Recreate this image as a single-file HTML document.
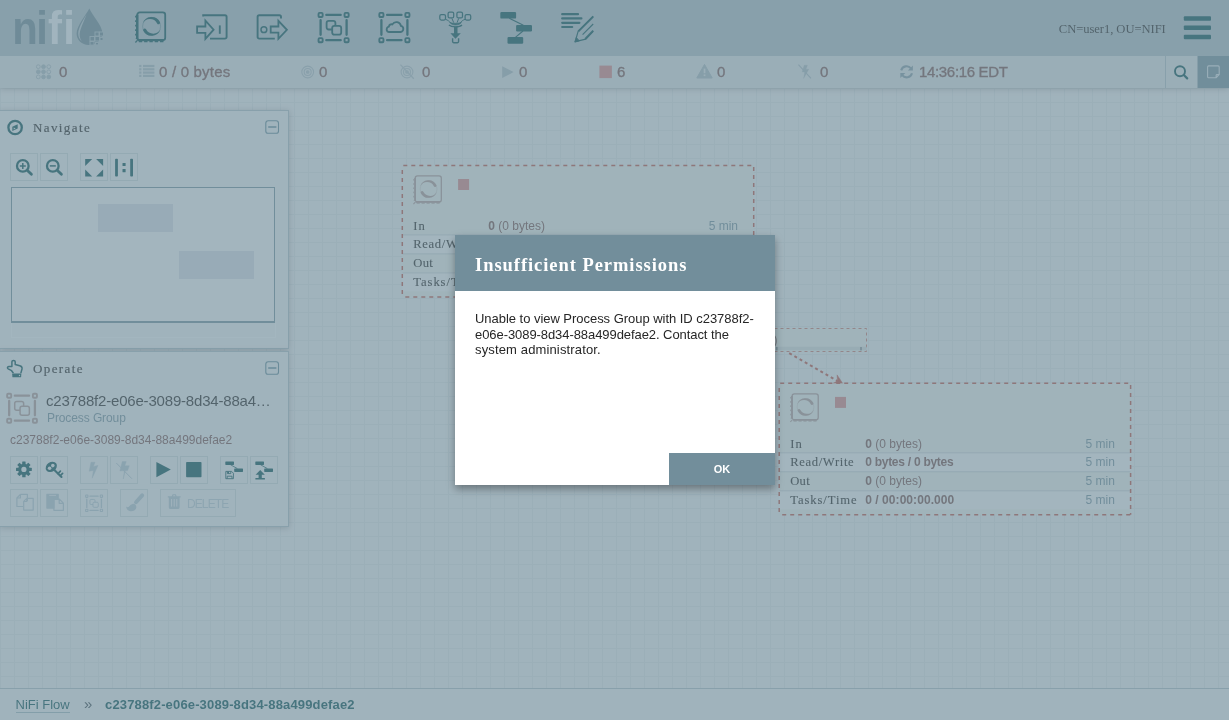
<!DOCTYPE html>
<html><head><meta charset="utf-8"><title>NiFi Flow</title>
<style>
*{box-sizing:border-box}
html,body{margin:0;padding:0}
body{width:1229px;height:720px;overflow:hidden;position:relative;font-family:"Liberation Sans",sans-serif;background:#f9fafb;color:#262626}
.abs{position:absolute}
.st,.ptitle,#crumbs,#opname,#optype,#opid,#deltxt,#dtitle,#dtext,#ok{will-change:transform}
#canvas{position:absolute;left:0;top:88px;width:1229px;height:632px;background-color:#e7eaed;
 background-image:linear-gradient(to right,#d9e0e4 1px,transparent 1px),linear-gradient(to bottom,#d9e0e4 1px,transparent 1px);background-size:14px 14px}
#flow{position:absolute;left:0;top:0;width:1229px;height:720px}
#header{position:absolute;left:0;top:0;width:1229px;height:56px;background:#aabbc3;z-index:2}
#glass,#dialog{z-index:5}
#status{position:absolute;left:0;top:56px;width:1229px;height:32px;background:#d8dee1;box-shadow:0 1px 6px rgba(0,0,0,.25)}
.st{position:absolute;top:0;height:32px;line-height:32px;font-size:15px;color:#775351;white-space:nowrap;-webkit-text-stroke:.35px #775351}
.panel{position:absolute;left:0;width:289px;background:#e7eaed;border:1px solid #aabbc3;border-left:none;box-shadow:0 1px 6px rgba(0,0,0,.25)}
.ptitle{-webkit-text-stroke:.2px #262626;position:absolute;left:33px;font-family:"Liberation Serif",serif;font-size:13px;letter-spacing:1.4px;color:#262626;white-space:nowrap}
.btn{position:absolute;width:28px;height:28px;border:1px solid #c7d4d6;background:#e7eaed}
.btn.dis{border-color:#dde6e8}
#crumbs{position:absolute;left:0;top:688px;width:1229px;height:32px;background:#e7eaed;border-top:1px solid #aabbc3;font-size:13px;line-height:31px;white-space:nowrap}
#glass{position:absolute;left:0;top:0;width:1229px;height:720px;background:#728e9b;opacity:.6}
#dialog{position:absolute;left:455px;top:235px;width:320px;height:250px;background:#fff;box-shadow:0 4px 8px rgba(0,0,0,.34)}
#dhead{position:absolute;left:0;top:0;width:320px;height:56px;background:#728e9b}
#dtitle{position:absolute;left:19.5px;top:18.7px;font-family:"Liberation Serif",serif;font-weight:bold;font-size:18.5px;letter-spacing:.95px;color:#fff;white-space:nowrap;line-height:22px}
#dtext{position:absolute;left:20px;top:75.8px;font-size:13px;line-height:15.7px;color:#262626;white-space:nowrap}
#ok{position:absolute;left:214px;top:218px;width:106px;height:32px;background:#728e9b;color:#fff;font-size:11px;font-weight:bold;text-align:center;line-height:32px}
svg{overflow:visible;will-change:transform}
</style></head><body>

<div id="canvas"></div>
<svg id="flow" viewBox="0 0 1229 720">
<!--FLOW-START-->
 <defs>
  
  <g id="chip2" fill="none">
    <rect x="1.1" y="0.9" width="27.9" height="27.8" rx="2.4" stroke-width="1.35"/>
    <path d="M0.9 3.2V27.6" stroke-width="1.8"/>
    <path d="M2 28.7H27.6" stroke-width="1.7"/>
    <path d="M-0.4 4.2V27" stroke-width="1" stroke-dasharray="1.7 2.8"/>
    <path d="M2.6 30H28" stroke-width="1" stroke-dasharray="3.4 1.9"/>
    <path d="M1.4 28.6L-0.8 31" stroke-width="1.1"/>
    <circle cx="15.4" cy="14.9" r="9" stroke-width="0.7" opacity=".4"/>
    <g stroke="none" fill="currentColor">
     <path id="cres2" d="M6.46 12A9.4 9.4 0 0 1 23.7 10.49A1.5 1.5 0 0 1 21.05 11.9A8.2 8.2 0 0 0 6.46 12Z"/>
     <use href="#cres2" transform="rotate(180 15.4 14.9)"/>
    </g>
   </g>
   <g id="proc">
   <rect x="0" y="0" width="351.4" height="131.5" fill="#e5ebe8"/>
   <rect x="0" y="69" width="351.4" height="19" fill="#edf0f3"/>
   <rect x="0" y="107" width="351.4" height="19" fill="#edf0f3"/>
   <path d="M0 69.5h351.4M0 88.5h351.4M0 107.5h351.4" stroke="#c7cfd4" stroke-width="1" fill="none"/>
   <g fill="none" stroke="#ba554a" stroke-width="1.5" stroke-dasharray="4 4"><path d="M0 0H351.4" stroke-dashoffset="-1"/><path d="M0 4.7V131.5"/><path d="M0 131.5H351.4" stroke-dashoffset="-3"/><path d="M351.4 0V131.5" stroke-dashoffset="-1.6"/></g>
   <g transform="translate(11.9 9.7) scale(.935)" stroke="#ad9897" color="#ad9897"><use href="#chip2"/></g>
   <rect x="55.8" y="13.6" width="11" height="11" fill="#d18686"/>
   <g font-family="'Liberation Serif',serif" font-size="12.6" fill="#262626" stroke="#262626" stroke-width=".12">
    <text x="11" y="64.5" textLength="11.5">In</text>
    <text x="11" y="82.5" textLength="63.5">Read/Write</text>
    <text x="11" y="101.5" textLength="19.5">Out</text>
    <text x="11" y="120.5" textLength="66.5">Tasks/Time</text>
   </g>
   <g font-family="'Liberation Sans',sans-serif" font-size="12" fill="#775351">
    <text x="86" y="64.5"><tspan font-weight="bold">0</tspan> (0 bytes)</text>
    <text x="86" y="82.5" font-weight="bold" textLength="88.5">0 bytes / 0 bytes</text>
    <text x="86" y="101.5"><tspan font-weight="bold">0</tspan> (0 bytes)</text>
    <text x="86" y="120.5" font-weight="bold" textLength="89">0 / 00:00:00.000</text>
   </g>
   <g font-family="'Liberation Sans',sans-serif" font-size="12" fill="#728e9b" text-anchor="end">
    <text x="335.7" y="64.5">5 min</text>
    <text x="335.7" y="82.5">5 min</text>
    <text x="335.7" y="101.5">5 min</text>
    <text x="335.7" y="120.5">5 min</text>
   </g>
  </g>
 </defs>
 <!-- connection label (mostly hidden behind dialog) -->
 <g>
  <rect x="642.5" y="328.5" width="224" height="23" fill="#e5ebe8" stroke="#ba554a" stroke-opacity=".75" stroke-width="1" stroke-dasharray="3 3"/>
  <rect x="643.5" y="346.7" width="223" height="3.5" fill="#d3d9da"/>
  <rect x="776" y="347" width="1.6" height="3.4" fill="#7d8a90"/><rect x="860.2" y="347" width="1.6" height="3.4" fill="#7d8a90"/>
  <text x="777.6" y="344" font-family="'Liberation Sans',sans-serif" font-size="12" fill="#775351" text-anchor="end"><tspan font-weight="bold">0</tspan> (0 bytes)</text>
 </g>
 <path d="M789.2 353.2L837.5 381.1" stroke="#ba554a" stroke-width="2" stroke-dasharray="3 3" fill="none"/>
 <path d="M843.4 384.5L837.1 374.9L837.5 381.1L832 383.8Z" fill="#ba554a" stroke="#ba554a" stroke-width=".5" stroke-linejoin="round"/>
 <use href="#proc" x="402.3" y="165.4"/>
 <use href="#proc" x="779.2" y="383.3"/>
<!--FLOW-END-->
</svg>

<div id="header">
<!--HEADER-START-->
 <svg class="abs" style="left:0;top:0" width="1229" height="56" viewBox="0 0 1229 56">
  <defs>
   <g id="chip" fill="none">
    <rect x="1.1" y="0.9" width="27.9" height="27.8" rx="2.4" stroke-width="1.8"/>
    <path d="M1 3.2V27.6" stroke-width="2.4"/>
    <path d="M2 28.6H27.6" stroke-width="2.2"/>
    <path d="M-0.5 4.2V27" stroke-width="1.2" stroke-dasharray="1.7 2.8"/>
    <path d="M2.6 30.2H28" stroke-width="1.2" stroke-dasharray="3.4 1.9"/>
    <path d="M1.4 28.6L-0.8 31" stroke-width="1.3"/>
    <circle cx="15.4" cy="14.9" r="9" stroke-width="0.7" opacity=".45"/>
    <g stroke="none" fill="currentColor">
     <path id="cres" d="M6.46 12A9.4 9.4 0 0 1 23.7 10.49A1.55 1.55 0 0 1 20.96 11.94A8.2 8.2 0 0 0 6.46 12Z"/>
     <use href="#cres" transform="rotate(180 15.4 14.9)"/>
    </g>
   </g>
   <g id="grpframe" fill="none">
    <rect x="0.95" y="1" width="4.1" height="4.1" rx="1" stroke-width="1.9"/>
    <rect x="26.95" y="1" width="4.1" height="4.1" rx="1" stroke-width="1.9"/>
    <rect x="0.95" y="26.25" width="4.1" height="4.1" rx="1" stroke-width="1.9"/>
    <rect x="26.95" y="26.25" width="4.1" height="4.1" rx="1" stroke-width="1.9"/>
    <path d="M8.7 3.05H23.1M8.7 28.3H23.1M3 8.3V22.9M29 8.3V22.9" stroke-width="2.3" stroke-linecap="round"/>
   </g>
  </defs>
  <!-- logo -->
  <g font-family="'Liberation Sans',sans-serif" font-weight="bold" font-size="47">
   <text transform="translate(12.2 43.5) scale(.89 1)" fill="#6c8894">n</text>
   <text transform="translate(36.3 43.5) scale(.89 1)" fill="#6c8894">i</text>
   <text transform="translate(47.9 43.5) scale(.89 1)" fill="#e8eef2">f</text>
   <text transform="translate(63.2 43.5) scale(.89 1)" fill="#e8eef2">i</text>
  </g>
  <path d="M89.3 8.6C86.5 14.5 76.6 26 76.6 33.6C76.6 40.2 82 45 88.6 45C96 45 102.4 40 102.4 33.2C102.4 26 92 15 89.3 8.6Z" fill="#6c8894"/>
  <path d="M86.6 14.2C82.8 20.5 78.2 28 78.2 33.6C78.2 37 79.6 39.6 81.8 41.4C79.6 38.4 79.2 35 80 31.6C81 27.2 84.4 20 86.6 14.2Z" fill="#b5c4cc"/>
  <g fill="#6c8894" stroke="#aabbc3" stroke-width="1">
   <rect x="95" y="32" width="4" height="4"/><rect x="99.5" y="32" width="4" height="4"/>
   <rect x="90" y="36.5" width="4.5" height="4.5"/><rect x="95" y="36.5" width="4.5" height="4.5"/><rect x="100" y="37.5" width="3" height="3"/>
   <rect x="90" y="41.5" width="4" height="3.6"/><rect x="95.5" y="42.5" width="3" height="2.4"/>
  </g>
  <g stroke="#095055" fill="none">
   <!-- processor -->
   <use href="#chip" x="136.2" y="11.5" color="#095055"/>
   <!-- input port -->
   <path d="M203.2 16.4V15.2H225A1.6 1.6 0 0 1 226.6 16.8V37A1.6 1.6 0 0 1 225 38.6H210" stroke-width="1.9"/>
   <path d="M197.1 26.5H205.4V20.6L213.6 29.7L205.4 38.8V32.9H197.1Z" stroke-width="1.8" stroke-linejoin="miter"/>
   <path d="M219.8 25.4V33.8" stroke-width="1.9"/>
   <!-- output port -->
   <path d="M281 18.6V16.8A1.6 1.6 0 0 0 279.4 15.2H259.2A1.6 1.6 0 0 0 257.6 16.8V37A1.6 1.6 0 0 0 259.2 38.6H274.8" stroke-width="1.9"/>
   <path d="M270.7 26.5H278.4V20.8L286.9 29.8L278.4 38.8V32.6H270.7Z" stroke-width="1.8"/>
   <circle cx="263.9" cy="29.7" r="2.9" stroke-width="1.5"/>
   <!-- process group -->
   <use href="#grpframe" x="317.6" y="11.9"/>
   <rect x="326.6" y="20.9" width="8.8" height="8.6" rx="2.2" stroke-width="1.8"/>
   <rect x="332.2" y="25.8" width="9" height="8.8" rx="2.2" stroke-width="1.8" fill="#aabbc3"/>
   <!-- remote process group -->
   <use href="#grpframe" x="378.4" y="11.9"/>
   <path d="M388.6 32H400.6A3.1 3.1 0 0 0 400.9 25.9A4.6 4.6 0 0 0 392.4 24.4A2.6 2.6 0 0 0 388.9 26.6A2.8 2.8 0 0 0 388.6 32Z" stroke-width="1.8"/>
   <!-- funnel -->
   <g stroke-width="1.25">
    <rect x="439.8" y="14.5" width="5.7" height="5.5" rx="1.5"/>
    <rect x="448.1" y="12.1" width="5.6" height="5.8" rx="1.5"/>
    <rect x="456.9" y="12.1" width="5.6" height="5.8" rx="1.5"/>
    <rect x="465.1" y="14.5" width="5.6" height="5.5" rx="1.5"/>
    <path d="M445.6 19.4C447.6 20 449.4 21.2 450.6 23M451.9 18.4L453.7 22.6M458.7 18.4L457.1 22.6M465 19.4C463 20 461.4 21.2 460.2 23" stroke-width="1"/>
    <path d="M448.9 25C451.6 27.6 459.4 27.6 462 25" stroke-width="1.2"/>
    <path d="M452.6 38.2V41.6A1.1 1.1 0 0 0 453.7 42.7H457.5A1.1 1.1 0 0 0 458.6 41.6V38.2" stroke-width="1.4"/>
   </g>
   <path d="M449.9 22.5C452 23.6 459 23.6 461.3 22.5C460.6 23.8 458.2 25 455.6 25C453 25 450.6 23.8 449.9 22.5Z" fill="#095055" stroke-width=".7"/>
   <path d="M454 26.4H457.5V33.3H460.8L455.45 38.8L450.4 33.3H454Z" fill="#095055" stroke="none"/>
   <!-- template -->
   <g fill="#095055" stroke="none">
    <rect x="500.3" y="11.9" width="15.8" height="6.7" rx="1.2"/>
    <rect x="516.1" y="24.9" width="15.9" height="6.5" rx="1.2"/>
    <rect x="507.5" y="36.9" width="15.7" height="6.8" rx="1.2"/>
   </g>
   <path d="M509.3 18.2L523.4 25.3M523 31L515.4 37.4" stroke-width="1.1"/>
   <!-- label -->
   <path d="M562.2 14.2H578M562.2 18.4H581.4M562.2 22.8H579.4M562.2 27H572.2" stroke-width="2.2" stroke-linecap="round"/>
   <path d="M593.2 16.2L578.2 31.2L575.2 41.6L585.8 39.2L593.2 31.4" stroke-width="1.2" stroke-linejoin="round"/>
   <path d="M593.2 16.6L578.4 31.4" stroke-width="1.9"/>
   <path d="M593.2 24L582.6 34.6" stroke-width="1.1"/>
   <path d="M593.2 30.6L585.2 39" stroke-width="1.9"/>
   <path d="M574.8 42.1L576.3 37.4L579.4 40.9Z" fill="#095055" stroke-width=".8"/>
  </g>
  <!-- user -->
  <text x="1058.8" y="33" font-family="'Liberation Serif',serif" font-size="12.6" fill="#262626" textLength="107">CN=user1, OU=NIFI</text>
  <!-- hamburger -->
  <g fill="#095055"><rect x="1183.8" y="16.2" width="27.2" height="4.5" rx="1"/><rect x="1183.8" y="25.6" width="27.2" height="4.5" rx="1"/><rect x="1183.8" y="34.8" width="27.2" height="4.5" rx="1"/></g>
 </svg>
<!--HEADER-END-->
</div>

<div id="status">
<!--STATUS-START-->
 <svg class="abs" style="left:0;top:0" width="1229" height="32" viewBox="0 56 1229 32">
  <!-- threads -->
  <g fill="#728e9b" stroke="#728e9b" stroke-width=".9" opacity=".5">
   <circle cx="38.3" cy="66.7" r="1.9" fill="none"/><circle cx="43.5" cy="66.7" r="1.9"/><circle cx="48.8" cy="66.7" r="1.9" fill="none"/>
   <circle cx="38.3" cy="71.8" r="1.9"/><circle cx="43.5" cy="71.8" r="1.9"/><circle cx="48.8" cy="71.8" r="1.9" fill="none"/>
   <circle cx="38.3" cy="76.9" r="1.9" fill="none"/><circle cx="43.5" cy="76.9" r="1.9"/><circle cx="48.8" cy="76.9" r="1.9"/>
  </g>
  <!-- list -->
  <g fill="#728e9b" opacity=".5">
   <rect x="139.2" y="64.9" width="2.2" height="2.2"/><rect x="143" y="64.9" width="11.4" height="2.2"/>
   <rect x="139.2" y="68.2" width="2.2" height="2.2"/><rect x="143" y="68.2" width="11.4" height="2.2"/>
   <rect x="139.2" y="71.5" width="2.2" height="2.2"/><rect x="143" y="71.5" width="11.4" height="2.2"/>
   <rect x="139.2" y="74.8" width="2.2" height="2.2"/><rect x="143" y="74.8" width="11.4" height="2.2"/>
  </g>
  <!-- bullseye (transmitting) -->
  <g fill="none" stroke="#728e9b" stroke-width="1.1" opacity=".42">
   <circle cx="307.7" cy="72" r="5.9"/><circle cx="307.7" cy="72" r="3.5"/><circle cx="307.7" cy="72" r="1.3" fill="#728e9b"/>
  </g>
  <!-- bullseye slash (not transmitting) -->
  <g fill="none" stroke="#728e9b" stroke-width="1.1" opacity=".42">
   <circle cx="407" cy="72" r="5.9"/><circle cx="407" cy="72" r="3.5"/><circle cx="407" cy="72" r="1.3" fill="#728e9b"/>
   <path d="M400.4 64.6L413.8 78.8" stroke-width="1.3"/>
  </g>
  <!-- running -->
  <path d="M502.2 66.2L513.6 72.1L502.2 78Z" fill="#728e9b" opacity=".5"/>
  <!-- stopped -->
  <rect x="599.4" y="65.6" width="12.5" height="12.5" fill="#d18686"/>
  <!-- invalid -->
  <g opacity=".5">
   <path d="M704.5 64.4L712.2 78H696.8Z" fill="#728e9b" stroke="#728e9b" stroke-width="1" stroke-linejoin="round"/>
   <rect x="703.7" y="68.6" width="1.7" height="4.6" fill="#d8dee1"/><rect x="703.7" y="74.4" width="1.7" height="1.7" fill="#d8dee1"/>
  </g>
  <!-- disabled -->
  <g opacity=".5" fill="#728e9b" stroke="#728e9b">
   <path d="M804.2 65.2H807.4L806 69.2H808.8L803.6 78.4L804.8 72H802.2Z" stroke-width=".3"/>
   <path d="M798.4 64.6L811 78.4" stroke-width="1.1" fill="none"/>
  </g>
  <!-- refresh -->
  <g fill="none" stroke="#728e9b" stroke-width="2.1" opacity=".85">
   <path d="M901.2 70.4A5.6 5.6 0 0 1 911 68.4"/>
   <path d="M912 73.2A5.6 5.6 0 0 1 902.2 75.2"/>
   <path d="M912.9 65.6V70.6H907.9Z" fill="#728e9b" stroke="none"/>
   <path d="M900.3 78V73H905.3Z" fill="#728e9b" stroke="none"/>
  </g>
  <!-- search -->
  <rect x="1165" y="56" width="1" height="32" fill="#aabbc3"/>
  <circle cx="1180" cy="71.2" r="5" fill="none" stroke="#095055" stroke-width="1.9"/>
  <path d="M1183.8 75L1187.2 78.4" stroke="#095055" stroke-width="2.2" stroke-linecap="round"/>
  <!-- bulletins -->
  <rect x="1197.5" y="56" width="31.5" height="32" fill="#728e9b"/>
  <path d="M1208.6 65.9H1218.2A1 1 0 0 1 1219.2 66.9V74.6L1216.2 77.7H1208.6A1 1 0 0 1 1207.6 76.7V66.9A1 1 0 0 1 1208.6 65.9ZM1219 74.6H1217A.9 .9 0 0 0 1216.1 75.5V77.5" fill="none" stroke="#d4dfe5" stroke-width="1.1"/>
 </svg>
 <div class="st" style="left:59.2px">0</div>
 <div class="st" style="left:159.4px;letter-spacing:.2px">0 / 0 bytes</div>
 <div class="st" style="left:319.4px">0</div>
 <div class="st" style="left:422.4px">0</div>
 <div class="st" style="left:519.2px">0</div>
 <div class="st" style="left:617.2px">6</div>
 <div class="st" style="left:717.4px">0</div>
 <div class="st" style="left:819.9px">0</div>
 <div class="st" style="left:918.7px;letter-spacing:-.33px">14:36:16 EDT</div>
<!--STATUS-END-->
</div>

<!--PANELS-START-->
<div class="panel" style="top:110px;height:239px"></div>
<div class="panel" style="top:351px;height:176px"></div>
<div class="abs" style="left:11px;top:187px;width:264px;height:136px;border:1px solid #728e9b;border-bottom-width:2px;background:#edf0f3"></div>
<div class="abs" style="left:11px;top:323px;width:265px;height:15px;border:1px solid #eef2f4;border-top:none"></div>
<div class="abs" style="left:98px;top:204px;width:75px;height:27.5px;background:#d3d7e1"></div>
<div class="abs" style="left:179px;top:251px;width:75px;height:27.5px;background:#d3d7e1"></div>
<div class="ptitle" style="top:120px">Navigate</div>
<div class="ptitle" style="top:361px">Operate</div>
<div class="btn" style="left:10px;top:153px"></div><div class="btn" style="left:40px;top:153px"></div>
<div class="btn" style="left:80px;top:153px"></div><div class="btn" style="left:110px;top:153px"></div>
<div class="btn" style="left:10px;top:456px"></div><div class="btn" style="left:40px;top:456px"></div>
<div class="btn" style="left:80px;top:456px"></div><div class="btn" style="left:110px;top:456px"></div>
<div class="btn" style="left:150px;top:456px"></div><div class="btn" style="left:180px;top:456px"></div>
<div class="btn" style="left:220px;top:456px"></div><div class="btn" style="left:250px;top:456px"></div>
<div class="btn" style="left:10px;top:489px"></div><div class="btn" style="left:40px;top:489px"></div>
<div class="btn" style="left:80px;top:489px"></div><div class="btn" style="left:120px;top:489px"></div>
<div class="btn" style="left:160px;top:489px;width:76px"></div>
<div class="abs" id="opname" style="left:46.3px;top:391px;font-size:15px;letter-spacing:-.19px;line-height:20px;color:#262626;white-space:nowrap">c23788f2-e06e-3089-8d34-88a4…</div>
<div class="abs" id="optype" style="left:46.5px;top:410px;font-size:12px;letter-spacing:-.1px;line-height:16px;color:#728e9b;white-space:nowrap">Process Group</div>
<div class="abs" id="opid" style="left:10px;top:432px;font-size:12px;line-height:16px;color:#775351;white-space:nowrap">c23788f2-e06e-3089-8d34-88a499defae2</div>
<div class="abs" id="deltxt" style="left:186.6px;top:496px;font-size:12px;line-height:16px;color:#b6c8d1;letter-spacing:-.9px;white-space:nowrap">DELETE</div>
<svg class="abs" style="left:0;top:0" width="300" height="720" viewBox="0 0 300 720">
 <!-- compass -->
 <circle cx="15.1" cy="127.5" r="6.7" fill="none" stroke="#095055" stroke-width="2.3"/>
 <path d="M17.7 124.2L12.3 126.8V131L17.7 128.5Z" fill="#095055"/><path d="M13.7 127.5L15.6 128.4L13.7 129.4Z" fill="#e7eaed"/>
 <!-- collapse icons -->
 <g fill="none" stroke="#5f8896">
  <rect x="265.8" y="120.8" width="12.7" height="12.5" rx="2.4" stroke-width="1.1"/><path d="M268.2 127H276.4" stroke-width="1.5"/>
  <rect x="265.8" y="361.8" width="12.7" height="12.5" rx="2.4" stroke-width="1.1"/><path d="M268.2 368H276.4" stroke-width="1.5"/>
 </g>
 <!-- zoom in -->
 <g fill="none" stroke="#095055">
  <circle cx="22.8" cy="165.9" r="5.8" stroke-width="2.3"/><path d="M27.4 170.4L31.4 174.3" stroke-width="2.8" stroke-linecap="round"/>
  <path d="M19.8 165.9H25.8M22.8 162.9V168.9" stroke-width="1.5"/>
  <circle cx="52.8" cy="165.9" r="5.8" stroke-width="2.3"/><path d="M57.4 170.4L61.4 174.3" stroke-width="2.8" stroke-linecap="round"/>
  <path d="M49.8 165.9H55.8" stroke-width="1.5"/>
 </g>
 <!-- fit -->
 <g fill="#095055">
  <path d="M85.2 158.9H92.2L85.2 165.9Z"/><path d="M103.1 158.9H96.1L103.1 165.9Z"/>
  <path d="M85.2 176.5H92.2L85.2 169.5Z"/><path d="M103.1 176.5H96.1L103.1 169.5Z"/>
  <!-- actual size 1:1 -->
  <rect x="115.1" y="158.8" width="2.8" height="17.8" rx=".8"/><rect x="130.2" y="158.8" width="2.8" height="17.8" rx=".8"/>
  <rect x="122.5" y="162.9" width="3.1" height="3.1" rx=".5"/><rect x="122.5" y="169.1" width="3.1" height="3.1" rx=".5"/>
 </g>
 <!-- hand -->
 <path d="M13.4 373.2L11.6 370.7L8.2 368.9C7 368.2 7.3 366.6 8.8 366.5L11.9 366.5V361.8C11.9 359.9 15.2 359.9 15.2 361.8V364.5L19.8 365.7C21.6 366.2 22.3 367.5 22 369L20.8 373.4" fill="none" stroke="#095055" stroke-width="1.5" stroke-linejoin="round"/>
 <rect x="12.3" y="373.4" width="8.9" height="3.9" rx=".9" fill="#095055"/><circle cx="19.5" cy="375.5" r=".65" fill="#e7eaed"/>
 <!-- operate group icon -->
 <g stroke="#ad9897" fill="none" transform="translate(6.2 392.7) scale(.99)">
  <use href="#grpframe"/>
  <rect x="8.6" y="8.8" width="9" height="9" rx="2" stroke-width="1.5"/>
  <rect x="14" y="13.8" width="9.4" height="9" rx="2" stroke-width="1.5" fill="#e7eaed"/>
 </g>
 <!-- gear -->
 <g transform="translate(23.9 469.4)" fill="#095055">
  <circle r="5.7"/>
  <g id="teeth"><rect x="-1.7" y="-7.9" width="3.4" height="15.8" rx=".5"/><rect x="-7.9" y="-1.7" width="15.8" height="3.4" rx=".5"/></g>
  <use href="#teeth" transform="rotate(45)"/>
  <circle r="2.6" fill="#e7eaed"/>
 </g>
 <!-- key -->
 <g fill="none" stroke="#095055">
  <ellipse cx="51.3" cy="466.9" rx="5.2" ry="3.9" transform="rotate(-36 51.3 466.9)" stroke-width="1.6" fill="#095055"/>
  <path d="M54.4 470L61.5 476.9" stroke-width="2.1" stroke-linecap="round"/>
  <path d="M58 473.6L60.4 471.2M60.3 475.6L62.6 473.4" stroke-width="1.7" stroke-linecap="round"/>
 </g>
 <circle cx="49.6" cy="468.2" r="1.8" fill="#e7eaed"/><circle cx="52.8" cy="465.6" r="1.8" fill="#e7eaed"/>
 <!-- enable / disable (disabled) -->
 <g fill="#aec2cd" stroke="#aec2cd">
  <path d="M91 462.2H95L93.4 466.4L98 465.4L92.2 478.2L93.4 470.4L89.2 471.2Z" stroke-width=".4"/>
  <path d="M122.3 461.6H126.2L124.8 465.8L129.3 465.8L127.6 470.6L125.2 470.8L123.3 479L124.4 470.6L119.9 471Z" stroke-width=".4"/>
  <path d="M116.3 463L131.9 478.7" stroke-width="1" fill="none"/>
 </g>
 <!-- play / stop -->
 <path d="M156.4 462L170.8 469.6L156.4 477.2Z" fill="#095055"/>
 <rect x="186.1" y="462" width="15.4" height="15.2" rx=".8" fill="#095055"/>
 <!-- create template / upload template -->
 <g fill="#095055">
  <rect x="225.3" y="461.5" width="8.7" height="3.4" rx=".6"/><rect x="234.2" y="468.4" width="8.8" height="3.5" rx=".6"/>
  <rect x="255.3" y="461.5" width="8.7" height="3.4" rx=".6"/><rect x="264.2" y="468.4" width="8.8" height="3.5" rx=".6"/>
  <path d="M260.2 470L264.8 474.7H261.8V478H264.9V479.5H255.4V478H258.6V474.7H255.6Z"/>
 </g>
 <path d="M230.6 464.8L237.4 468.6M260.6 464.8L267.4 468.6" stroke="#095055" stroke-width=".8" fill="none"/>
 <g fill="none" stroke="#095055" stroke-width=".9">
  <path d="M225.8 471.4H231.6L233.4 473.2V478.7H225.8Z"/>
  <path d="M227.4 471.6V473.6H230.8V471.6M227.2 478.6V476.2H232V478.6" />
  <rect x="227.6" y="471.6" width="1.4" height="1.8" fill="#095055" stroke="none"/>
 </g>
 <!-- copy / paste / group / color / delete (disabled) -->
 <g fill="none" stroke="#aec2cd" stroke-width="1.2" stroke-linejoin="round">
  <path d="M20.4 494.4H27.4V501M20.4 494.4L16.9 497.9V506.5H23M20.4 494.6V498H17"/>
  <path d="M26.8 498.3H33.2V510.1H23.7V501.4ZM26.8 498.5V501.5H23.8"/>
  <path d="M46.9 494.4H58.2V499.4L56.6 499.2H53.9V508.1H46.9Z" fill="#aec2cd"/>
  <path d="M49.2 495.4H56" stroke="#e7eaed" stroke-width=".8"/>
  <path d="M53.9 499.1H59.4L63.4 503.1V510.3H53.9ZM59.2 499.3V503.3H63.2"/>
 </g>
 <g stroke="#aec2cd" fill="none" transform="translate(85.1 494.5) scale(.563)"><use href="#grpframe"/>
  <rect x="8.6" y="8.8" width="9" height="9" rx="2" stroke-width="1.7"/><rect x="14" y="13.8" width="9.4" height="9" rx="2" stroke-width="1.7" fill="#e7eaed"/></g>
 <g fill="#aec2cd">
  <path d="M142.2 495.4L136 502.2" stroke="#aec2cd" stroke-width="3.9" stroke-linecap="round" fill="none"/>
  <path d="M132.6 503.9C135 503.6 136.6 505.4 136.3 507.4C135.8 510.6 132.4 511.7 129.6 511C127.6 510.4 126.4 508.8 126 506.6C127 507.3 128.2 507.6 129.1 506.6C130 505.5 130.8 504.2 132.6 503.9Z"/>
  <!-- trash -->
  <path d="M167.8 496.2H180.6V497.6H179.6V507.6A1.3 1.3 0 0 1 178.3 508.9H170.1A1.3 1.3 0 0 1 168.8 507.6V497.6H167.8ZM171.8 496.2L172.6 494.2H175.8L176.6 496.2H175.4L175 495.2H173.4L173 496.2Z"/>
 </g>
 <path d="M171.6 499V506.6M174.2 499V506.6M176.8 499V506.6" stroke="#e7eaed" stroke-width="1" fill="none"/>
</svg>
<!--PANELS-END-->

<div id="crumbs">
 <span class="abs" style="left:15.5px;color:#095055;border-bottom:1px solid #9fb6bd;line-height:17px;top:7px;height:17px">NiFi Flow</span>
 <span class="abs" style="left:84px;color:#3a4a52;font-size:15px;top:-1px">»</span>
 <span class="abs" style="left:105px;color:#095055;font-weight:bold;letter-spacing:.15px">c23788f2-e06e-3089-8d34-88a499defae2</span>
</div>

<div id="glass"></div>

<div id="dialog">
 <div id="dhead"><div id="dtitle">Insufficient Permissions</div></div>
 <div id="dtext"><span style="letter-spacing:-.035px">Unable to view Process Group with ID c23788f2-</span><br><span style="letter-spacing:-.07px">e06e-3089-8d34-88a499defae2. Contact the</span><br><span style="letter-spacing:.14px">system administrator.</span></div>
 <div id="ok">OK</div>
</div>

</body></html>
